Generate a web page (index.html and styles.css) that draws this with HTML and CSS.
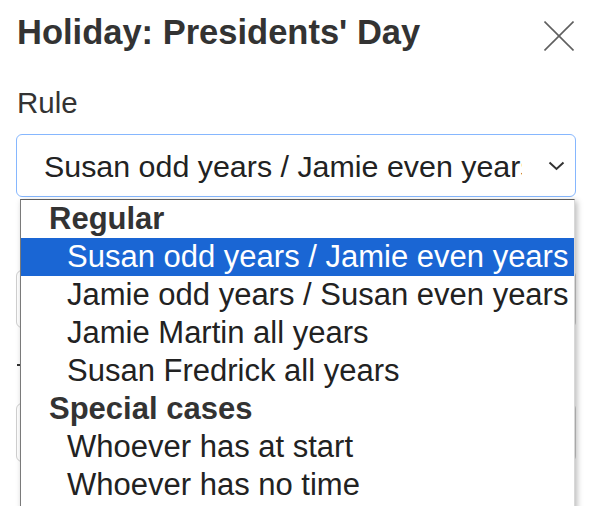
FILE: index.html
```html
<!DOCTYPE html>
<html lang="en">
<head>
<meta charset="utf-8">
<title>Holiday: Presidents' Day</title>
<link rel="stylesheet" href="styles.css">
</head>
<body>
<div class="modal">
  <div class="modal-header">
    <h1 class="modal-title">Holiday: Presidents' Day</h1>
    <svg class="close-icon" width="30" height="30" viewBox="0 0 30 30" aria-label="Close">
      <line x1="0.5" y1="0.5" x2="29.5" y2="29.5"/>
      <line x1="29.5" y1="0.5" x2="0.5" y2="29.5"/>
    </svg>
  </div>

  <div class="field field-rule">
    <div class="field-label">Rule</div>
    <div class="select-box">
      <span class="select-value">Susan odd years / Jamie even years</span>
      <svg class="chevron" width="17" height="10" viewBox="0 0 17 10">
        <polyline points="1.5,1.5 8.5,8 15.5,1.5"/>
      </svg>
    </div>
  </div>

  <div class="field field-second">
    <div class="label-spacer"></div>
    <div class="input-box"></div>
  </div>

  <div class="field field-third">
    <div class="label-spacer"><span class="label-tick"></span></div>
    <div class="input-box input-box-tall"></div>
  </div>

  <div class="dropdown">
    <div class="group-label">Regular</div>
    <div class="option selected">Susan odd years / Jamie even years</div>
    <div class="option">Jamie odd years / Susan even years</div>
    <div class="option">Jamie Martin all years</div>
    <div class="option">Susan Fredrick all years</div>
    <div class="group-label">Special cases</div>
    <div class="option">Whoever has at start</div>
    <div class="option">Whoever has no time</div>
  </div>
</div>
</body>
</html>
```

FILE: styles.css
```css
html, body {
  margin: 0;
  padding: 0;
  height: 506px;
  overflow: hidden;
  background: #ffffff;
}

body {
  font-family: "Liberation Sans", Arial, sans-serif;
  color: #333333;
}

.modal {
  position: relative;
  padding: 0 19px 0 16px;
}

.modal-header {
  display: flex;
  justify-content: space-between;
  align-items: flex-start;
}

.modal-title {
  margin: 12px 0 0 1px;
  font-size: 34.5px;
  line-height: 40px;
  font-weight: bold;
  color: #333333;
}

.close-icon {
  margin-top: 21px;
  margin-right: 2px;
  stroke: #5f5f5f;
  stroke-width: 1.6;
}

.field-label {
  margin-top: 34px;
  font-size: 29.5px;
  line-height: 34px;
  padding-left: 1px;
  color: #333333;
}

.select-box {
  margin-top: 14px;
  height: 61px;
  border: 1px solid #86b7fe;
  border-radius: 6px;
  display: flex;
  align-items: center;
  padding: 0 10px 0 27px;
}

.select-value {
  flex: 1;
  min-width: 0;
  overflow: hidden;
  white-space: nowrap;
  font-size: 30.4px;
  line-height: 34px;
  color: #222222;
  margin-right: 26px;
}

.chevron {
  flex: none;
  fill: none;
  stroke: #333333;
  stroke-width: 2;
}

.label-spacer {
  height: 34px;
}

.field-second .label-spacer {
  margin-top: 14px;
}

.input-box {
  margin-top: 25px;
  height: 56px;
  border: 1px solid #cfcfcf;
  border-radius: 6px;
}

.field-third .label-spacer {
  margin-top: 20px;
  display: flex;
  align-items: center;
}

.label-tick {
  display: block;
  width: 3px;
  height: 2px;
  margin-left: 1px;
  background: #333333;
}

.input-box-tall {
  margin-top: 21px;
  height: 57px;
}

.dropdown {
  position: absolute;
  left: 20px;
  top: 199px;
  width: 555px;
  height: 330px;
  overflow: hidden;
  background: #ffffff;
  border: 1px solid #7a7a7a;
  border-top-color: #5e5e5e;
  border-right-color: #d8d8d8;
  box-sizing: border-box;
  box-shadow: 2px 2px 6px rgba(0, 0, 0, 0.28);
}

.group-label {
  height: 38px;
  line-height: 38px;
  font-size: 31px;
  font-weight: bold;
  color: #333333;
  padding-left: 28px;
  white-space: nowrap;
}

.option {
  height: 38px;
  line-height: 38px;
  font-size: 31px;
  color: #222222;
  padding-left: 46px;
  white-space: nowrap;
}

.option.selected {
  background: #1a66d4;
  color: #ffffff;
}
```
